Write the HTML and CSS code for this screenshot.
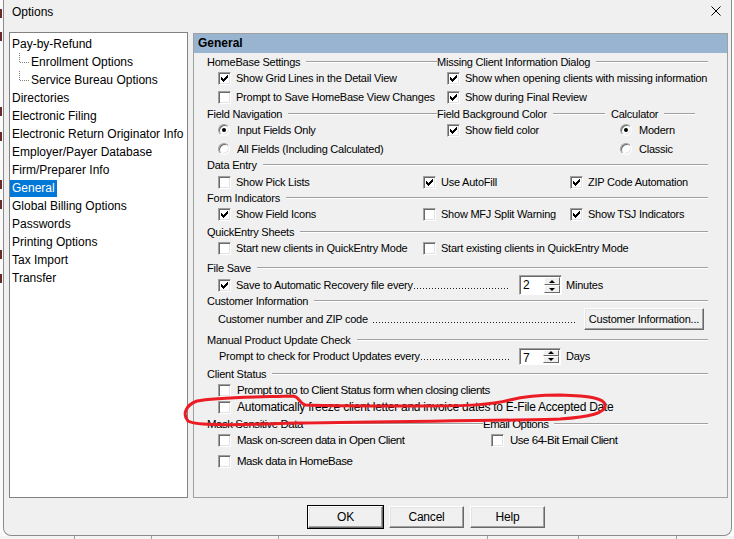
FILE: index.html
```html
<!DOCTYPE html>
<html>
<head>
<meta charset="utf-8">
<title>Options</title>
<link rel="stylesheet" href="styles.css">
</head>
<body>
<div class="desk">
  <div class="edge"><i class="m m1"></i><i class="m m2"></i><i class="m m3"></i><i class="m m4"></i><i class="m m5"></i><i class="m m6"></i><i class="m m7"></i><i class="m m8"></i></div>
  <div class="window">
    <div class="titlebar">
      <span class="title">Options</span>
      <svg class="close" width="10" height="10" viewBox="0 0 10 10"><path d="M0.5 0.5 L9.5 9.5 M9.5 0.5 L0.5 9.5" stroke="#000" stroke-width="1" fill="none"/></svg>
    </div>
    <div class="main">
      <div class="tree">
        <div class="ti">Pay-by-Refund</div>
        <div class="ti sub">Enrollment Options</div>
        <div class="ti sub">Service Bureau Options</div>
        <div class="ti">Directories</div>
        <div class="ti">Electronic Filing</div>
        <div class="ti">Electronic Return Originator Info</div>
        <div class="ti">Employer/Payer Database</div>
        <div class="ti">Firm/Preparer Info</div>
        <div class="ti"><span class="sel">General</span></div>
        <div class="ti">Global Billing Options</div>
        <div class="ti">Passwords</div>
        <div class="ti">Printing Options</div>
        <div class="ti">Tax Import</div>
        <div class="ti">Transfer</div>
      </div>
      <div class="panel">
        <div class="ph">General</div>
        <div class="pb">
          <div class="row">
            <div class="hd w230"><span>HomeBase Settings</span><i class="ln"></i></div>
            <div class="hd fill"><span>Missing Client Information Dialog</span><i class="ln"></i></div>
          </div>
          <div class="row items">
            <label class="cb w229"><span class="box"><svg class="ck" viewBox="0 0 7 7"><path d="M6 0h1v1h-1z M5 1h2v1h-2z M0 2h1v1h-1z M4 2h3v1h-3z M0 3h2v1h-2z M3 3h3v1h-3z M0 4h5v1h-5z M1 5h3v1h-3z M2 6h1v1h-1z"/></svg></span>Show Grid Lines in the Detail View</label>
            <label class="cb"><span class="box"><svg class="ck" viewBox="0 0 7 7"><path d="M6 0h1v1h-1z M5 1h2v1h-2z M0 2h1v1h-1z M4 2h3v1h-3z M0 3h2v1h-2z M3 3h3v1h-3z M0 4h5v1h-5z M1 5h3v1h-3z M2 6h1v1h-1z"/></svg></span>Show when opening clients with missing information</label>
          </div>
          <div class="row items">
            <label class="cb w229"><span class="box"></span>Prompt to Save HomeBase View Changes</label>
            <label class="cb"><span class="box"><svg class="ck" viewBox="0 0 7 7"><path d="M6 0h1v1h-1z M5 1h2v1h-2z M0 2h1v1h-1z M4 2h3v1h-3z M0 3h2v1h-2z M3 3h3v1h-3z M0 4h5v1h-5z M1 5h3v1h-3z M2 6h1v1h-1z"/></svg></span>Show during Final Review</label>
          </div>
          <div class="row">
            <div class="hd w230"><span>Field Navigation</span><i class="ln"></i></div>
            <div class="hd w168"><span>Field Background Color</span><i class="ln"></i></div>
            <div class="hd w84 ml6"><span>Calculator</span><i class="ln"></i></div>
          </div>
          <div class="row items">
            <label class="rb w229"><span class="rad"><i class="dot"></i></span>Input Fields Only</label>
            <label class="cb w173"><span class="box"><svg class="ck" viewBox="0 0 7 7"><path d="M6 0h1v1h-1z M5 1h2v1h-2z M0 2h1v1h-1z M4 2h3v1h-3z M0 3h2v1h-2z M3 3h3v1h-3z M0 4h5v1h-5z M1 5h3v1h-3z M2 6h1v1h-1z"/></svg></span>Show field color</label>
            <label class="rb"><span class="rad"><i class="dot"></i></span>Modern</label>
          </div>
          <div class="row items">
            <label class="rb w402"><span class="rad"></span>All Fields (Including Calculated)</label>
            <label class="rb"><span class="rad"></span>Classic</label>
          </div>
          <div class="row">
            <div class="hd fill"><span>Data Entry</span><i class="ln"></i></div>
          </div>
          <div class="row items">
            <label class="cb w205"><span class="box"></span>Show Pick Lists</label>
            <label class="cb w147"><span class="box"><svg class="ck" viewBox="0 0 7 7"><path d="M6 0h1v1h-1z M5 1h2v1h-2z M0 2h1v1h-1z M4 2h3v1h-3z M0 3h2v1h-2z M3 3h3v1h-3z M0 4h5v1h-5z M1 5h3v1h-3z M2 6h1v1h-1z"/></svg></span>Use AutoFill</label>
            <label class="cb"><span class="box"><svg class="ck" viewBox="0 0 7 7"><path d="M6 0h1v1h-1z M5 1h2v1h-2z M0 2h1v1h-1z M4 2h3v1h-3z M0 3h2v1h-2z M3 3h3v1h-3z M0 4h5v1h-5z M1 5h3v1h-3z M2 6h1v1h-1z"/></svg></span>ZIP Code Automation</label>
          </div>
          <div class="row">
            <div class="hd fill"><span>Form Indicators</span><i class="ln"></i></div>
          </div>
          <div class="row items">
            <label class="cb w205"><span class="box"><svg class="ck" viewBox="0 0 7 7"><path d="M6 0h1v1h-1z M5 1h2v1h-2z M0 2h1v1h-1z M4 2h3v1h-3z M0 3h2v1h-2z M3 3h3v1h-3z M0 4h5v1h-5z M1 5h3v1h-3z M2 6h1v1h-1z"/></svg></span>Show Field Icons</label>
            <label class="cb w147"><span class="box"></span>Show MFJ Split Warning</label>
            <label class="cb"><span class="box"><svg class="ck" viewBox="0 0 7 7"><path d="M6 0h1v1h-1z M5 1h2v1h-2z M0 2h1v1h-1z M4 2h3v1h-3z M0 3h2v1h-2z M3 3h3v1h-3z M0 4h5v1h-5z M1 5h3v1h-3z M2 6h1v1h-1z"/></svg></span>Show TSJ Indicators</label>
          </div>
          <div class="row">
            <div class="hd fill"><span>QuickEntry Sheets</span><i class="ln"></i></div>
          </div>
          <div class="row items">
            <label class="cb w205"><span class="box"></span>Start new clients in QuickEntry Mode</label>
            <label class="cb"><span class="box"></span>Start existing clients in QuickEntry Mode</label>
          </div>
          <div class="row">
            <div class="hd fill"><span>File Save</span><i class="ln"></i></div>
          </div>
          <div class="row items">
            <label class="cb lead w292"><span class="box"><svg class="ck" viewBox="0 0 7 7"><path d="M6 0h1v1h-1z M5 1h2v1h-2z M0 2h1v1h-1z M4 2h3v1h-3z M0 3h2v1h-2z M3 3h3v1h-3z M0 4h5v1h-5z M1 5h3v1h-3z M2 6h1v1h-1z"/></svg></span><span class="lt">Save to Automatic Recovery file every</span><span class="dots"></span></label>
            <div class="spin"><span class="val">2</span><span class="arrows"><i class="up"></i><i class="dn"></i></span></div>
            <span class="unit">Minutes</span>
          </div>
          <div class="row">
            <div class="hd fill"><span>Customer Information</span><i class="ln"></i></div>
          </div>
          <div class="row items">
            <div class="lead w359"><span class="lt">Customer number and ZIP code</span><span class="dots sp"></span></div>
            <button class="btn wide">Customer Information...</button>
          </div>
          <div class="row">
            <div class="hd fill"><span>Manual Product Update Check</span><i class="ln"></i></div>
          </div>
          <div class="row items">
            <div class="lead w292 pl1"><span class="lt">Prompt to check for Product Updates every</span><span class="dots"></span></div>
            <div class="spin short"><span class="val">7</span><span class="arrows"><i class="up"></i><i class="dn"></i></span></div>
            <span class="unit days">Days</span>
          </div>
          <div class="row">
            <div class="hd fill"><span>Client Status</span><i class="ln"></i></div>
          </div>
          <div class="row items seg2">
            <label class="cb"><span class="box"></span>Prompt to go to Client Status form when closing clients</label>
          </div>
          <div class="row items seg">
            <label class="cb"><span class="box"></span>Automatically freeze client letter and invoice dates to E-File Accepted Date</label>
          </div>
          <div class="row seg2">
            <div class="hd w276"><span>Mask Sensitive Data</span><i class="ln"></i></div>
            <div class="hd fill"><span>Email Options</span><i class="ln"></i></div>
          </div>
          <div class="row items seg2">
            <label class="cb w273"><span class="box"></span>Mask on-screen data in Open Client</label>
            <label class="cb"><span class="box"></span>Use 64-Bit Email Client</label>
          </div>
          <div class="row items seg2">
            <label class="cb"><span class="box"></span>Mask data in HomeBase</label>
          </div>
        </div>
      </div>
    </div>
    <div class="buttons">
      <button class="btn def">OK</button>
      <button class="btn">Cancel</button>
      <button class="btn">Help</button>
    </div>
  </div>
</div>
<div class="below">
  <i class="cell c1"></i><i class="cell c2"></i><i class="cell c3"></i><i class="cell c4"></i><i class="cell c5"></i><i class="cell c6"></i>
</div>
<svg class="mark" width="734" height="539" viewBox="0 0 734 539">
  <path d="M293 396 C260 397 215 397 197 401 C186 405 182 414 188 421 C196 426 230 425 300 423 C400 421 500 421 560 419 C590 417 606 413 605 405 C604 398 590 396 560 395 C540 395 525 396 510 400 C490 405 470 406 420 406 C370 406 330 406 305 405 C298 402 300 397 293 396" fill="none" stroke="#ec1c24" stroke-width="3" stroke-linejoin="round" stroke-linecap="round"/>
</svg>
</body>
</html>
```

FILE: styles.css
```css
* { box-sizing: border-box; }
body {
  margin: 0;
  width: 734px;
  height: 539px;
  overflow: hidden;
  position: relative;
  background: #ffffff;
  font-family: "Liberation Sans", Arial, sans-serif;
  color: #000;
}
.desk { display: flex; height: 536px; }
.edge {
  width: 3px;
  height: 536px;
  background: #fafafa;
  display: flex;
  flex-direction: column;
  padding-top: 9px;
}
.m { display: block; width: 2px; height: 9px; background: #6b2a2a; flex: none; }
.m1 { margin-top: 0; }
.m2 { margin-top: 14px; }
.m3 { margin-top: 66px; }
.m4 { margin-top: 16px; }
.m5 { margin-top: 39px; }
.m6 { margin-top: 11px; }
.m7 { margin-top: 41px; }
.m8 { margin-top: 15px; }

.window {
  width: 729px;
  height: 536px;
  background: #f0f0f0;
  border: 1px solid #8c8c8c;
  border-top: none;
  border-radius: 0 0 8px 8px;
  display: flex;
  flex-direction: column;
}
.titlebar {
  height: 31px;
  display: flex;
  align-items: flex-start;
  justify-content: space-between;
  padding: 0 10px 0 8px;
}
.title { font-size: 12px; line-height: 24px; }
.close { margin-top: 6px; }

.main {
  display: flex;
  align-items: flex-start;
  gap: 5px;
  padding: 1px 0 0 5px;
}
.tree {
  width: 179px;
  height: 466px;
  background: #fff;
  border: 1px solid #828282;
  padding: 2px 0 0 2px;
  font-size: 12px;
}
.ti { height: 18px; line-height: 18px; white-space: nowrap; position: relative; }
.ti.sub { padding-left: 19px; }
.ti.sub::before {
  content: "";
  position: absolute;
  left: 7px;
  top: 0;
  height: 9px;
  border-left: 1px dotted #808080;
}
.ti.sub::after {
  content: "";
  position: absolute;
  left: 8px;
  top: 9px;
  width: 9px;
  border-top: 1px dotted #808080;
}
.sel {
  display: inline-block;
  background: #0078d7;
  color: #fff;
  margin-left: -2px;
  padding: 0 2px;
  line-height: 17px;
}

.panel {
  margin-top: 1px;
  width: 535px;
  height: 465px;
  border: 1px solid #a0a0a0;
}
.ph {
  height: 19px;
  background: #99b4d1;
  font-weight: bold;
  font-size: 12px;
  line-height: 19px;
  padding-left: 4px;
}
.pb {
  display: grid;
  grid-template-rows: 16px 19px 17px 16px 19px 16px 17px 16px 16px 18px 16px 20px 17px 16px 18px 21px 16px 18px 16px 17px 17px 16px 21px 16px;
  padding: 1px 19px 0 13px;
  font-size: 11px;
  letter-spacing: -0.23px;
}
.row {
  display: flex;
  align-items: center;
  height: 16px;
  white-space: nowrap;
}
.row.items { padding-left: 11px; }
.row.seg { font-size: 12px; letter-spacing: -0.25px; }
.row.seg2 { font-size: 11.5px; letter-spacing: -0.47px; }
.hd { display: flex; align-items: center; }
.hd.fill { flex: 1; }
.ln {
  flex: 1;
  height: 2px;
  border-top: 1px solid #a0a0a0;
  border-bottom: 1px solid #fff;
  margin-left: 6px;
}
.w230 { width: 230px; }
.w168 { width: 168px; }
.w84 { width: 84px; }
.ml6 { margin-left: 6px; }
.w276 { width: 276px; }
.w229 { width: 229px; }
.w173 { width: 173px; }
.w402 { width: 402px; }
.w205 { width: 205px; }
.w147 { width: 147px; }
.w273 { width: 273px; }
.w292 { width: 292px; }
.w359 { width: 359px; }
.pl1 { padding-left: 1px; }

.cb, .rb { display: flex; align-items: center; }
.box {
  width: 13px;
  height: 13px;
  flex: none;
  margin-right: 5px;
  background: #fff;
  border: 1px solid;
  border-color: #a0a0a0 #fff #fff #a0a0a0;
  box-shadow: inset 1px 1px #696969, inset -1px -1px #e3e3e3;
  display: flex;
  align-items: center;
  justify-content: center;
}
.seg .box, .seg2 .box { margin-right: 6px; }
.ck { width: 7px; height: 7px; shape-rendering: crispEdges; fill: #000; }
.rad {
  width: 12px;
  height: 12px;
  flex: none;
  margin-right: 7px;
  border-radius: 50%;
  background: #fff;
  border: 1px solid;
  border-color: #a0a0a0 #fff #fff #a0a0a0;
  box-shadow: inset 1px 1px #696969, inset -1px -1px #e3e3e3;
  display: flex;
  align-items: center;
  justify-content: center;
}
.dot { width: 4px; height: 4px; border-radius: 50%; background: #000; }

.lead { display: flex; align-items: center; }
.lead .lt { flex: none; }
.dots {
  flex: 1;
  height: 12px;
  background-image: linear-gradient(to right, #222 1px, transparent 1px);
  background-size: 3px 1px;
  background-repeat: repeat-x;
  background-position: 1px 9px;
}
.dots.sp { margin-left: 4px; }

.spin {
  margin-left: 9px;
  width: 43px;
  height: 20px;
  flex: none;
  background: #fff;
  border: 1px solid;
  border-color: #a0a0a0 #fff #fff #a0a0a0;
  box-shadow: inset 1px 1px #696969;
  display: flex;
  justify-content: space-between;
  padding: 1px 1px 1px 3px;
  font-size: 12px;
}
.spin.short { width: 42px; height: 17px; }
.val { line-height: 16px; }
.arrows { width: 16px; display: flex; flex-direction: column; }
.arrows i {
  flex: 1;
  background: #f0f0f0;
  border: 1px solid;
  border-color: #fff #696969 #696969 #fff;
  display: flex;
  align-items: center;
  justify-content: center;
}
.arrows i::after {
  content: "";
  border-left: 3px solid transparent;
  border-right: 3px solid transparent;
}
.arrows .up::after { border-bottom: 3px solid #000; }
.arrows .dn::after { border-top: 3px solid #000; }
.unit { margin-left: 4px; }
.unit.days { margin-left: 5px; }

.btn {
  height: 22px;
  width: 75px;
  background: #f0f0f0;
  border: 1px solid;
  border-color: #fff #696969 #696969 #fff;
  box-shadow: inset -1px -1px #a0a0a0, inset 1px 1px #e3e3e3;
  font-family: "Liberation Sans", Arial, sans-serif;
  font-size: 12px;
  letter-spacing: -0.2px;
  color: #000;
  padding: 0;
}
.btn.wide { width: 120px; margin-left: 7px; font-size: 11px; }
.btn.def { outline: 1px solid #000; outline-offset: 0; }
.buttons {
  display: flex;
  gap: 6px;
  padding-left: 304px;
  margin-top: 8px;
}

.below { display: flex; height: 3px; background: #f4f4f4; }
.cell { height: 3px; border-right: 1px solid #a0a0a0; }
.c1 { width: 75px; }
.c2 { width: 77px; }
.c3 { width: 127px; }
.c4 { width: 209px; }
.c5 { width: 91px; }
.c6 { width: 98px; }

.mark { position: absolute; left: 0; top: 0; pointer-events: none; }
```
